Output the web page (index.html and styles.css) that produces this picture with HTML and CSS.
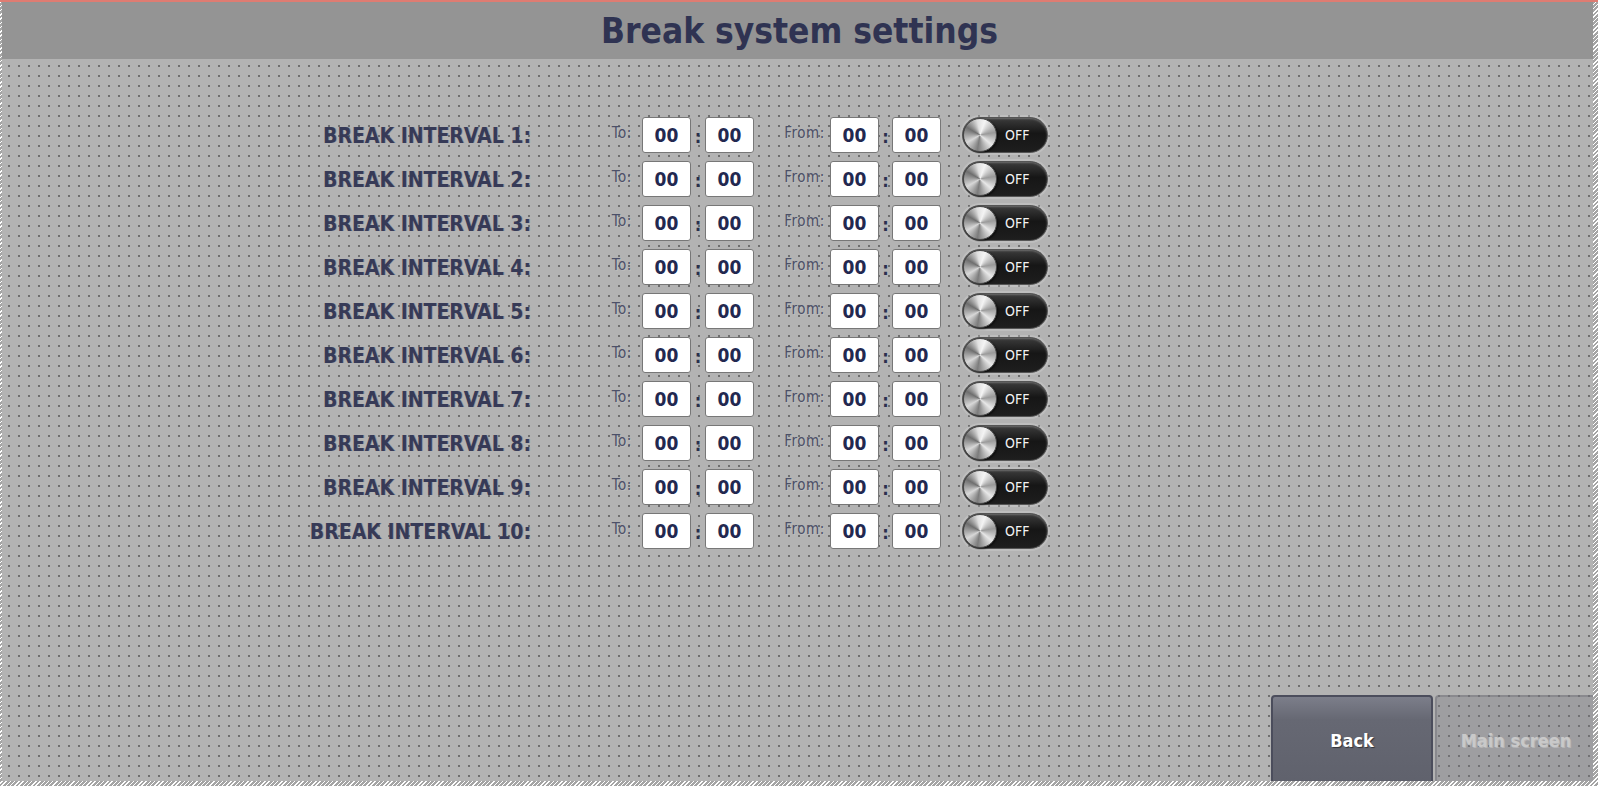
FILE: index.html
```html
<!DOCTYPE html>
<html lang="en">
<head>
<meta charset="utf-8">
<title>Break system settings</title>
<link rel="stylesheet" href="styles.css">
</head>
<body>
<div class="screen">
  <div class="inner">
    <header class="hdr"><h1 class="title">Break system settings</h1></header>
    <main class="content">
      <div class="rows">
        <div class="row"><span class="lbl">BREAK INTERVAL 1:</span><span class="tag tag-to">To:</span><span class="box">00</span><span class="colon">:</span><span class="box">00</span><span class="tag tag-from">From:</span><span class="box">00</span><span class="colon">:</span><span class="box">00</span><div class="toggle"><span class="knob"></span><span class="off">OFF</span></div></div>
        <div class="row"><span class="lbl">BREAK INTERVAL 2:</span><span class="tag tag-to">To:</span><span class="box">00</span><span class="colon">:</span><span class="box">00</span><span class="tag tag-from">From:</span><span class="box">00</span><span class="colon">:</span><span class="box">00</span><div class="toggle"><span class="knob"></span><span class="off">OFF</span></div></div>
        <div class="row"><span class="lbl">BREAK INTERVAL 3:</span><span class="tag tag-to">To:</span><span class="box">00</span><span class="colon">:</span><span class="box">00</span><span class="tag tag-from">From:</span><span class="box">00</span><span class="colon">:</span><span class="box">00</span><div class="toggle"><span class="knob"></span><span class="off">OFF</span></div></div>
        <div class="row"><span class="lbl">BREAK INTERVAL 4:</span><span class="tag tag-to">To:</span><span class="box">00</span><span class="colon">:</span><span class="box">00</span><span class="tag tag-from">From:</span><span class="box">00</span><span class="colon">:</span><span class="box">00</span><div class="toggle"><span class="knob"></span><span class="off">OFF</span></div></div>
        <div class="row"><span class="lbl">BREAK INTERVAL 5:</span><span class="tag tag-to">To:</span><span class="box">00</span><span class="colon">:</span><span class="box">00</span><span class="tag tag-from">From:</span><span class="box">00</span><span class="colon">:</span><span class="box">00</span><div class="toggle"><span class="knob"></span><span class="off">OFF</span></div></div>
        <div class="row"><span class="lbl">BREAK INTERVAL 6:</span><span class="tag tag-to">To:</span><span class="box">00</span><span class="colon">:</span><span class="box">00</span><span class="tag tag-from">From:</span><span class="box">00</span><span class="colon">:</span><span class="box">00</span><div class="toggle"><span class="knob"></span><span class="off">OFF</span></div></div>
        <div class="row"><span class="lbl">BREAK INTERVAL 7:</span><span class="tag tag-to">To:</span><span class="box">00</span><span class="colon">:</span><span class="box">00</span><span class="tag tag-from">From:</span><span class="box">00</span><span class="colon">:</span><span class="box">00</span><div class="toggle"><span class="knob"></span><span class="off">OFF</span></div></div>
        <div class="row"><span class="lbl">BREAK INTERVAL 8:</span><span class="tag tag-to">To:</span><span class="box">00</span><span class="colon">:</span><span class="box">00</span><span class="tag tag-from">From:</span><span class="box">00</span><span class="colon">:</span><span class="box">00</span><div class="toggle"><span class="knob"></span><span class="off">OFF</span></div></div>
        <div class="row"><span class="lbl">BREAK INTERVAL 9:</span><span class="tag tag-to">To:</span><span class="box">00</span><span class="colon">:</span><span class="box">00</span><span class="tag tag-from">From:</span><span class="box">00</span><span class="colon">:</span><span class="box">00</span><div class="toggle"><span class="knob"></span><span class="off">OFF</span></div></div>
        <div class="row"><span class="lbl">BREAK INTERVAL 10:</span><span class="tag tag-to">To:</span><span class="box">00</span><span class="colon">:</span><span class="box">00</span><span class="tag tag-from">From:</span><span class="box">00</span><span class="colon">:</span><span class="box">00</span><div class="toggle"><span class="knob"></span><span class="off">OFF</span></div></div>
      </div>
      <div class="btns">
        <button class="btn btn-back">Back</button>
        <button class="btn btn-main">Main screen</button>
      </div>
    </main>
  </div>
</div>
</body>
</html>
```
FILE: styles.css
```css
html, body {
  margin: 0;
  padding: 0;
}
body {
  width: 1598px;
  height: 786px;
  overflow: hidden;
  font-family: "DejaVu Sans Condensed", "DejaVu Sans", sans-serif;
}
.screen {
  box-sizing: border-box;
  width: 1598px;
  height: 786px;
  border-top: 2px solid #df7c72;
  padding: 0 5px 5px 2px;
  background: repeating-linear-gradient(135deg, #ffffff 0 1px, #a4a4a4 1px 3px);
}
.inner {
  height: 779px;
  display: flex;
  flex-direction: column;
  overflow: hidden;
  background-color: #b3b3b3;
  background-image: conic-gradient(from 270deg at 2px 2px, #6f6f6f 25%, transparent 0);
  background-size: 10px 10px;
  background-position: 6px 3px;
}
.hdr {
  height: 57px;
  flex: none;
  background: #949494;
  display: flex;
  align-items: center;
  justify-content: center;
}
.title {
  margin: 0;
  font-family: "DejaVu Sans Condensed", "DejaVu Sans", sans-serif;
  font-stretch: condensed;
  font-weight: bold;
  font-size: 35px;
  color: #2f3352;
  padding-left: 4px;
}
.content {
  flex: 1;
  display: flex;
  flex-direction: column;
  min-height: 0;
}
.rows {
  padding: 58px 0 0 278px;
  display: flex;
  flex-direction: column;
  gap: 8px;
}
.row {
  display: grid;
  grid-template-columns: 251px 111px 49px 14px 49px 76px 49px 13px 49px 107px;
  align-items: center;
  height: 36px;
}
.lbl {
  text-align: right;
  font-weight: bold;
  font-stretch: condensed;
  font-size: 21px;
  color: #363a57;
  text-shadow: 1px 0 0 rgba(40, 30, 60, 0.2);
  white-space: nowrap;
  padding-top: 2px;
}
.tag {
  text-align: right;
  font-size: 15px;
  letter-spacing: 0.6px;
  font-stretch: condensed;
  color: #4c5068;
  text-shadow: 1px 1px 0 rgba(255, 255, 255, 0.15);
  margin-top: -5px;
}
.tag-to { padding-right: 10px; }
.tag-from { padding-right: 5px; }
.box {
  box-sizing: border-box;
  height: 36px;
  background: #fff;
  border: 1px solid #777;
  border-radius: 3px;
  display: flex;
  align-items: center;
  justify-content: center;
  font-weight: bold;
  font-size: 19px;
  color: #222850;
}
.colon {
  text-align: center;
  font-weight: bold;
  font-size: 18px;
  color: #2a2f4e;
  padding-top: 3px;
}
.toggle {
  justify-self: end;
  position: relative;
  box-sizing: border-box;
  width: 86px;
  height: 36px;
  border-radius: 18px;
  background: linear-gradient(#3c3c3c, #161616 45%, #1e1e1e);
  border: 1px solid #555;
  box-shadow: inset 0 1px 2px rgba(255,255,255,0.25), 0 0 0 2px rgba(215,215,215,0.3);
  display: flex;
  align-items: center;
}
.knob {
  position: absolute;
  left: 0;
  top: 0;
  box-sizing: border-box;
  width: 34px;
  height: 34px;
  border-radius: 50%;
  border: 1px solid #4a4a4a;
  background: conic-gradient(from 20deg, #f4f4f4, #9a9a9a 60deg, #e8e8e8 110deg, #7c7c7c 170deg, #d8d8d8 220deg, #6e6e6e 280deg, #e0e0e0 330deg, #f4f4f4);
  box-shadow: 1px 1px 2px rgba(0,0,0,0.6);
}
.off {
  margin-left: 42px;
  font-size: 14px;
  font-stretch: condensed;
  color: #f2f2f2;
}
.btns {
  margin-top: auto;
  display: flex;
  justify-content: flex-end;
  gap: 2px;
  margin-right: -4px;
  height: 86px;
  flex: none;
}
.btn {
  width: 162px;
  height: 95px;
  border-radius: 4px;
  font-family: "DejaVu Sans Condensed", "DejaVu Sans", sans-serif;
  font-stretch: condensed;
  font-weight: bold;
  font-size: 18px;
  padding: 0 0 4px 0;
  cursor: pointer;
}
.btn-back {
  background: linear-gradient(#7c7e8a, #666873 25%, #5f616c);
  border: 2px solid #4b4d5c;
  color: #ffffff;
  text-shadow: 1px 1px 1px rgba(0,0,0,0.5);
}
.btn-main {
  background: rgba(120, 120, 128, 0.35);
  border: 2px solid rgba(110, 110, 120, 0.45);
  color: #c9c9c9;
  text-shadow: 1px 1px 0 rgba(255,255,255,0.25);
}
```
